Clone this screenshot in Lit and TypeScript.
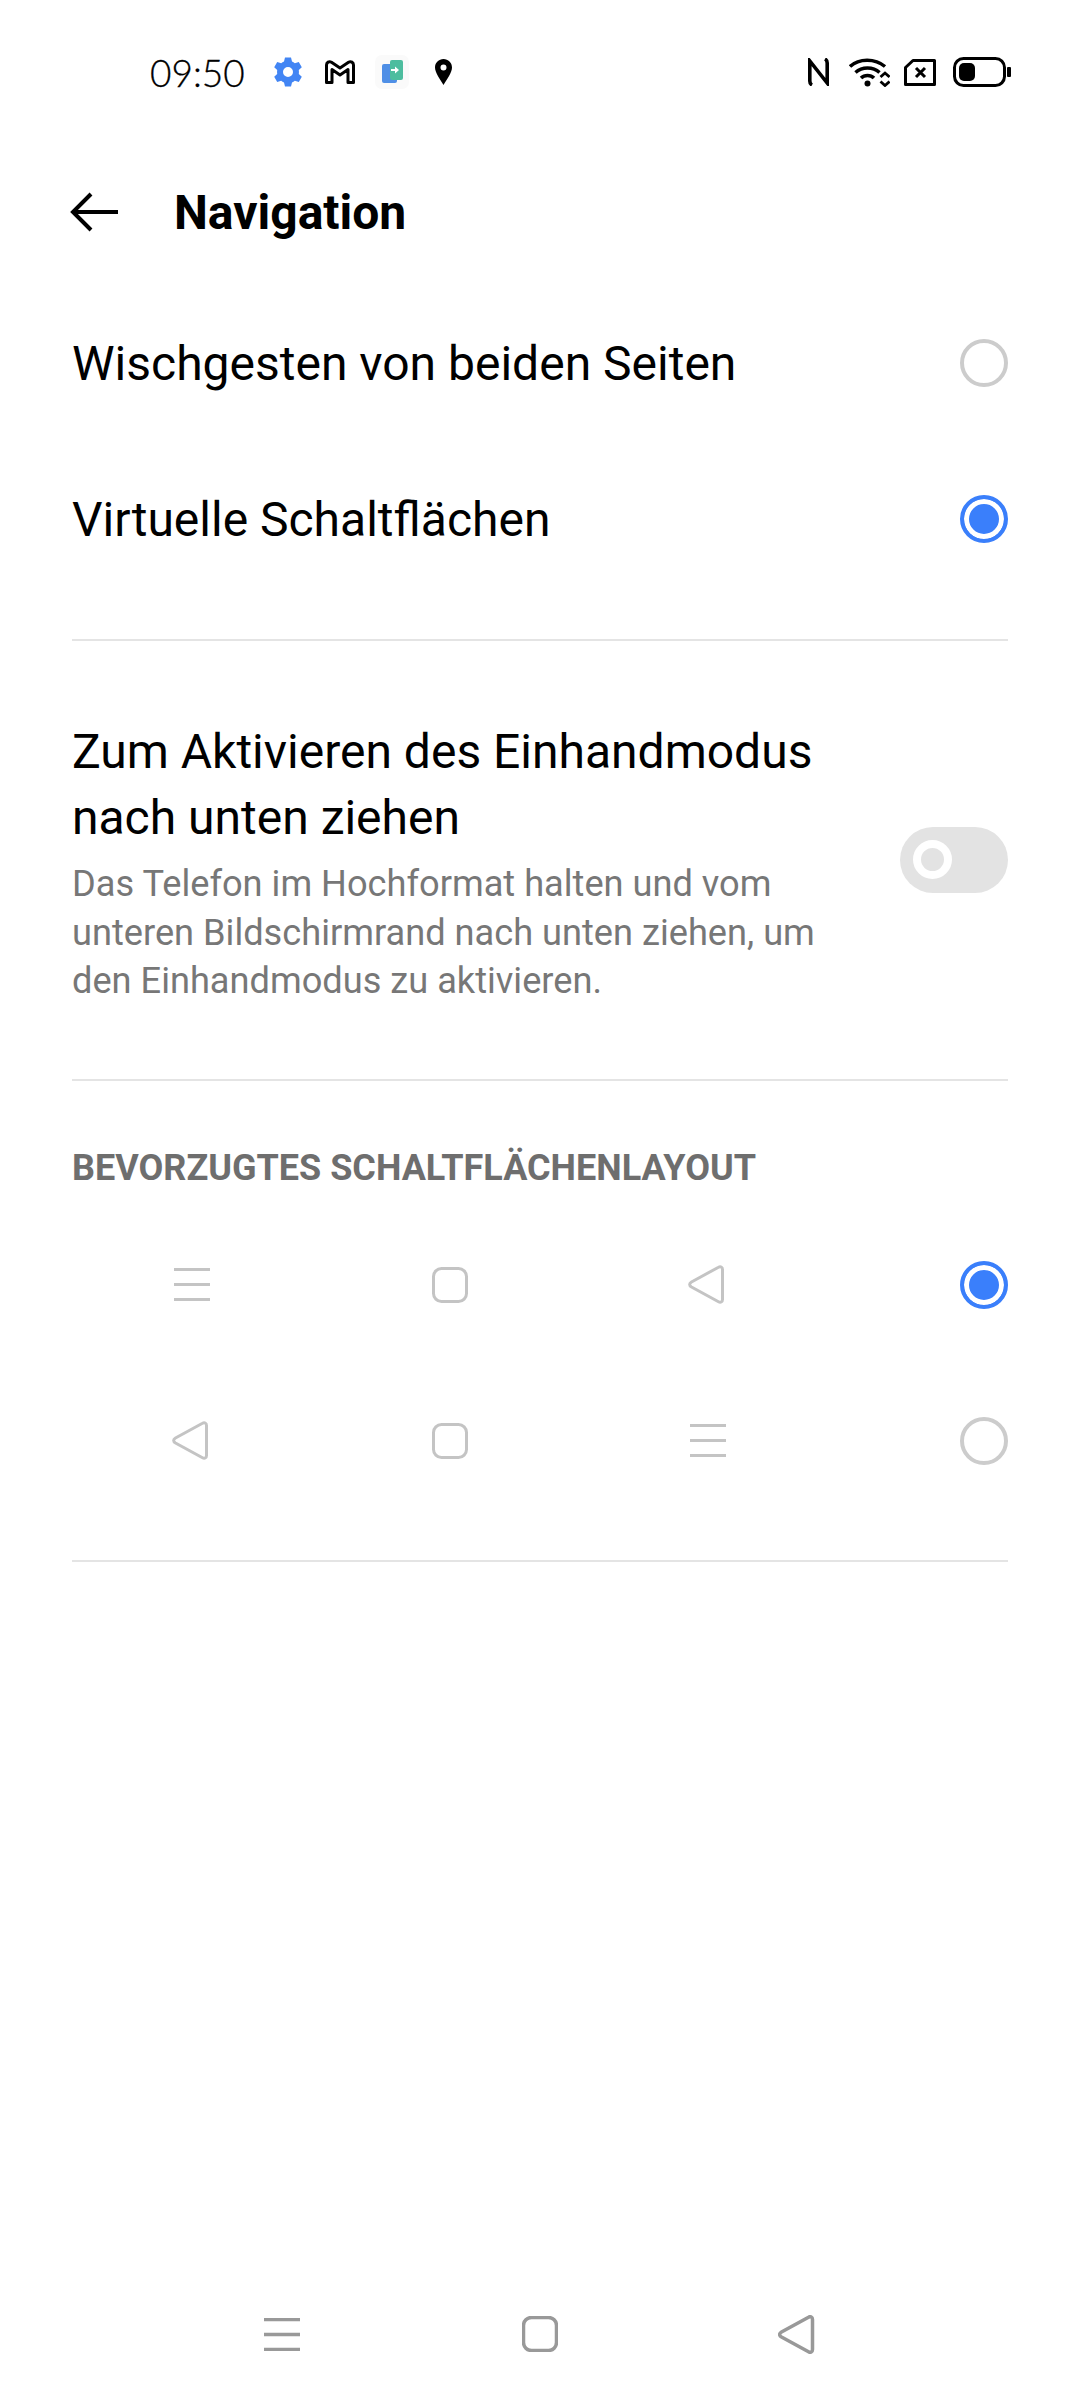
import {LitElement, css, html, svg} from 'lit';
import {customElement} from 'lit/decorators.js';

const menuIcon = svg`<path d="M0 1.500H36M0 16.500H36M0 31.500H36" />`;
const homeIcon = svg`<rect x="1.500" y="1.500" width="33" height="33" rx="8" />`;
const backIcon = svg`<path d="M34.500 4.500V34.500C34.500 37 32.500 38 30.500 36.800L3.500 22C1 20.500 1 18.500 3.500 17L30.500 2.200C32.500 1 34.500 2 34.500 4.500Z" />`;

type NavIcon = 'menu' | 'home' | 'back';

function navIcon(kind: NavIcon) {
  if (kind === 'menu') {
    return html`<svg class="nav-icon" width="36" height="33" viewBox="0 0 36 33">${menuIcon}</svg>`;
  }
  if (kind === 'home') {
    return html`<svg class="nav-icon" width="36" height="36" viewBox="0 0 36 36">${homeIcon}</svg>`;
  }
  // the triangle sits 2px left of the column centre
  return html`<svg class="nav-icon" width="40" height="39" viewBox="0 0 40 39">${backIcon}</svg>`;
}

@customElement('app-root')
export class AppRoot extends LitElement {
  static styles = css`
    :host {
      display: flex;
      flex-direction: column;
      width: 1080px;
      height: 2400px;
      background: #fff;
      color: #000;
      font-family: Roboto, sans-serif;
    }
    svg {
      display: block;
      flex: none;
    }

    .status {
      display: flex;
      align-items: center;
      height: 144px;
      padding: 0 69px 0 150px;
      box-sizing: border-box;
    }
    .time {
      font-family: Lato, sans-serif;
      font-size: 37px;
      font-weight: 300;
      width: 123px;
      -webkit-text-stroke: 0.3px #000;
    }
    .status-left {
      display: flex;
      align-items: center;
    }
    .status-right {
      display: flex;
      align-items: center;
      margin-left: auto;
    }

    .header {
      display: flex;
      align-items: center;
      height: 136px;
      padding-left: 70px;
    }
    .header h1 {
      margin: 0 0 0 56px;
      font-size: 48px;
      font-weight: 700;
    }
    .back {
      fill: none;
      stroke: #000;
      stroke-width: 4;
    }

    .list {
      padding: 5px 72px 0;
    }
    .row {
      display: flex;
      align-items: center;
      justify-content: space-between;
      height: 156px;
      font-size: 48px;
    }
    .radio {
      box-sizing: border-box;
      width: 48px;
      height: 48px;
      border-radius: 50%;
      border: 4px solid #cccccc;
      flex: none;
    }
    .radio.on {
      border-color: #3a7ffb;
      background: #3a7ffb;
      box-shadow: inset 0 0 0 5px #fff;
    }
    .rule {
      height: 2px;
      background: #e4e4e4;
    }
    .rule.first {
      margin-top: 42px;
    }

    .one-hand {
      display: flex;
      align-items: center;
      justify-content: space-between;
      padding: 78px 0 73px;
    }
    .one-hand h2 {
      margin: 0;
      font-size: 48px;
      font-weight: 400;
      line-height: 66px;
    }
    .one-hand p {
      margin: 9px 0 0;
      font-size: 36.200px;
      line-height: 48.500px;
      color: #777777;
    }
    .switch {
      display: flex;
      align-items: center;
      box-sizing: border-box;
      width: 108px;
      height: 66px;
      margin-bottom: 5px;
      padding-left: 13px;
      border-radius: 33px;
      background: #e3e3e3;
      flex: none;
    }
    .knob {
      box-sizing: border-box;
      width: 39px;
      height: 39px;
      border-radius: 50%;
      border: 8px solid #fff;
      background: #e3e3e3;
    }

    .section-title {
      margin: 0;
      padding-top: 67px;
      font-size: 36px;
      font-weight: 700;
      line-height: 40px;
      color: #6e6e6e;
    }
    .layouts {
      padding-top: 19px;
    }
    .layout {
      display: flex;
      align-items: center;
      gap: 186px;
      height: 156px;
      padding-left: 84px;
    }
    .cell {
      display: flex;
      justify-content: center;
      width: 72px;
    }
    .layout .radio {
      margin-left: auto;
    }
    .layouts + .rule {
      margin-top: 41px;
    }
    .nav-icon {
      fill: none;
      stroke: #c4c4c4;
      stroke-width: 3;
    }

    .nav {
      display: grid;
      grid-template-columns: repeat(3, 258px);
      justify-content: center;
      justify-items: center;
      align-items: center;
      margin-top: auto;
      height: 48px;
      margin-bottom: 42px;
    }
    .nav .nav-icon {
      stroke: #999999;
      stroke-width: 3.500;
    }
  `;

  render() {
    return html`
      <div class="status">
        <div class="status-left">
          <span class="time">09:50</span>
          <svg width="30" height="30" viewBox="0 0 30 30">
            <path fill="#4285f4" fill-rule="evenodd" d="M12 0.500H18L19 4.600C20 5 21 5.500 21.800 6.200L25.800 5L28.800 10.200L25.800 13.100C26 14.300 26 15.700 25.800 16.900L28.800 19.800L25.800 25L21.800 23.800C21 24.500 20 25 19 25.400L18 29.500H12L11 25.400C10 25 9 24.500 8.200 23.800L4.200 25L1.200 19.800L4.200 16.900C4 15.700 4 14.300 4.200 13.100L1.200 10.200L4.200 5L8.200 6.200C9 5.500 10 5 11 4.600ZM15 10A5 5 0 1 0 15 20A5 5 0 1 0 15 10Z" />
          </svg>
          <svg style="margin-left:22px" width="30" height="24" viewBox="0 0 30 24">
            <path fill="none" stroke="#000" stroke-width="3" stroke-linejoin="round" d="M1.500 5C1.500 2.500 4 .8 6.500 2.300L15 8L23.500 2.300C26 .8 28.500 2.500 28.500 5V22.500H23V9.500L15 15L7 9.500V22.500H1.500Z" />
          </svg>
          <svg style="margin-left:20px" width="34" height="34" viewBox="0 0 34 34">
            <rect width="34" height="34" rx="7" fill="#fafafa" />
            <rect x="7" y="9" width="15" height="19" rx="2" fill="#4f8fe6" />
            <rect x="15" y="5" width="13" height="20" rx="2" fill="#4dbd9f" />
            <path d="M16 14H20V11.500L24 15L20 18.500V16H16Z" fill="#fff" />
          </svg>
          <svg style="margin-left:26px" width="17" height="26" viewBox="0 0 17 26">
            <path fill="#000" fill-rule="evenodd" d="M8.500 0C13.200 0 17 3.700 17 8.400C17 13.500 12 20 8.500 26C5 20 0 13.500 0 8.400C0 3.700 3.800 0 8.500 0ZM8.500 5.500A3 3 0 1 0 8.500 11.500A3 3 0 1 0 8.500 5.500Z" />
          </svg>
        </div>
        <div class="status-right">
          <svg width="21" height="28" viewBox="0 0 21 28">
            <path fill="none" stroke="#000" stroke-width="3.600" d="M4 27C2 26 1.800 25 1.800 23V3L19.200 25V5C19.200 3 19 2 17 1" />
          </svg>
          <svg style="margin-left:20px" width="41" height="30" viewBox="0 0 41 30">
            <g fill="none" stroke="#000" stroke-width="3.500">
              <path d="M1 9.500C10 1 26 1 36 9.500" />
              <path d="M6.500 15.500C13 9.500 24 9.500 30.500 15.500" />
              <path d="M12 21C15.500 17.500 21.500 17.500 25 21" />
            </g>
            <circle cx="18.500" cy="26.500" r="3" fill="#000" />
            <path fill="none" stroke="#000" stroke-width="2.800" d="M31.500 20L36 16L40.500 20M31.500 24.500L36 28.500L40.500 24.500" />
          </svg>
          <svg style="margin-left:14px" width="32" height="27" viewBox="0 0 32 27">
            <path fill="none" stroke="#000" stroke-width="3" d="M9 1.500H30.500V25.500H1.500V8.500Z" stroke-linejoin="round" />
            <path fill="none" stroke="#000" stroke-width="3" d="M12 9L21 18M21 9L12 18" />
          </svg>
          <svg style="margin-left:17px" width="58" height="30" viewBox="0 0 58 30">
            <rect x="1.500" y="1.500" width="50" height="27" rx="9" fill="none" stroke="#000" stroke-width="3" />
            <rect x="6" y="6" width="16" height="18" rx="5" fill="#000" />
            <rect x="54" y="10" width="4" height="10" rx="1" fill="#000" />
          </svg>
        </div>
      </div>

      <div class="header">
        <svg class="back" width="48" height="40" viewBox="0 0 48 40">
          <path d="M21 2L3 20L21 38M3 20H48" />
        </svg>
        <h1>Navigation</h1>
      </div>

      <div class="list">
        <div class="row">
          <span>Wischgesten von beiden Seiten</span>
          <span class="radio"></span>
        </div>
        <div class="row">
          <span>Virtuelle Schaltflächen</span>
          <span class="radio on"></span>
        </div>
        <div class="rule first"></div>

        <div class="one-hand">
          <div>
            <h2>Zum Aktivieren des Einhandmodus<br />nach unten ziehen</h2>
            <p>Das Telefon im Hochformat halten und vom<br />unteren Bildschirmrand nach unten ziehen, um<br />den Einhandmodus zu aktivieren.</p>
          </div>
          <div class="switch"><div class="knob"></div></div>
        </div>
        <div class="rule"></div>

        <h3 class="section-title">BEVORZUGTES SCHALTFLÄCHENLAYOUT</h3>
        <div class="layouts">
          <div class="layout">
            <div class="cell">${navIcon('menu')}</div>
            <div class="cell">${navIcon('home')}</div>
            <div class="cell">${navIcon('back')}</div>
            <span class="radio on"></span>
          </div>
          <div class="layout">
            <div class="cell">${navIcon('back')}</div>
            <div class="cell">${navIcon('home')}</div>
            <div class="cell">${navIcon('menu')}</div>
            <span class="radio"></span>
          </div>
        </div>
        <div class="rule"></div>
      </div>

      <div class="nav">
        ${navIcon('menu')} ${navIcon('home')} ${navIcon('back')}
      </div>
    `;
  }
}

declare global {
  interface HTMLElementTagNameMap {
    'app-root': AppRoot;
  }
}
